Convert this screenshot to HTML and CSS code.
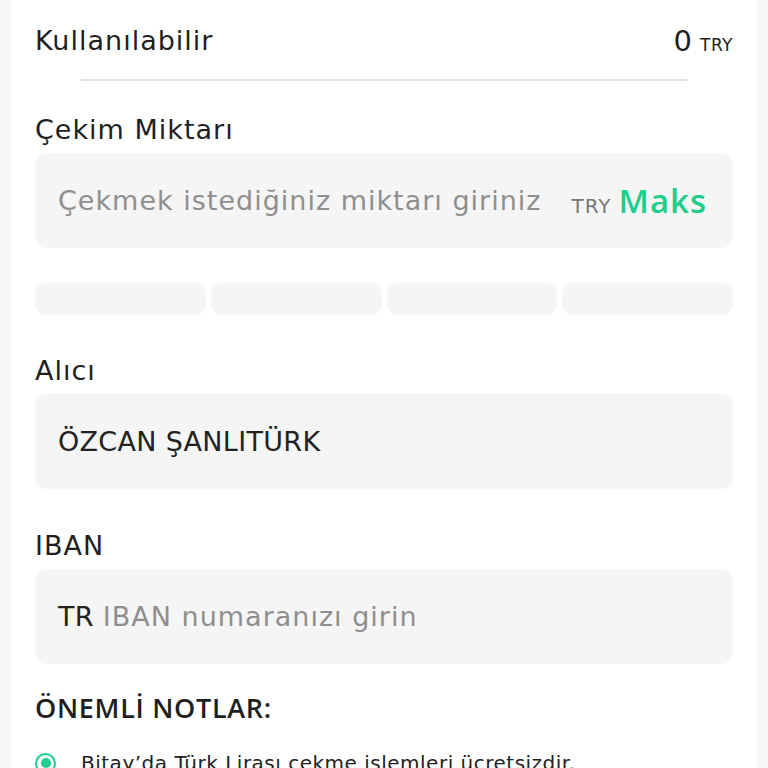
FILE: index.html
```html
<!DOCTYPE html>
<html lang="tr">
<head>
<meta charset="utf-8">
<title>TRY Çekme</title>
<link rel="stylesheet" href="styles.css">
</head>
<body>
<main class="card">
  <div class="balance">
    <span class="balance-label">Kullanılabilir</span>
    <span class="balance-value"><span class="amount">0</span><span class="unit">TRY</span></span>
  </div>
  <div class="divider"></div>

  <label class="field-label first">Çekim Miktarı</label>
  <div class="input">
    <span class="placeholder">Çekmek istediğiniz miktarı giriniz</span>
    <span class="input-suffix"><span class="suffix-unit">TRY</span><span class="max">Maks</span></span>
  </div>
  <div class="chips">
    <span class="chip"></span>
    <span class="chip"></span>
    <span class="chip"></span>
    <span class="chip"></span>
  </div>

  <label class="field-label">Alıcı</label>
  <div class="input">
    <span class="value">ÖZCAN ŞANLITÜRK</span>
  </div>

  <label class="field-label iban">IBAN</label>
  <div class="input">
    <span class="value prefix">TR</span><span class="placeholder">IBAN numaranızı girin</span>
  </div>

  <h2 class="notes-title">ÖNEMLİ NOTLAR:</h2>
  <ul class="notes">
    <li class="note"><span class="dot"></span><span>Bitay’da Türk Lirası çekme işlemleri ücretsizdir.</span></li>
  </ul>
</main>
</body>
</html>
```

FILE: styles.css
```css
* {
  box-sizing: border-box;
}

html, body {
  margin: 0;
  padding: 0;
}

body {
  background: #f6f6f6;
  font-family: "DejaVu Sans", "Open Sans", sans-serif;
  color: #1f1f1f;
  overflow: hidden;
}

.card {
  margin: 0 11px;
  min-height: 100vh;
  background: #ffffff;
  padding: 0 24px;
}

.balance {
  height: 79px;
  display: flex;
  align-items: center;
  justify-content: space-between;
  padding-top: 2px;
}

.balance-label {
  font-size: 27px;
  line-height: 36px;
  letter-spacing: 1px;
}

.balance-value {
  display: flex;
  align-items: baseline;
  gap: 8px;
}

.amount {
  font-size: 29px;
}

.unit {
  font-size: 17px;
  letter-spacing: 0.5px;
}

.divider {
  height: 2px;
  margin: 0 46px;
  background: #e0e0e0;
}

.field-label {
  display: block;
  margin-top: 38px;
  font-size: 27px;
  line-height: 36px;
  height: 36px;
  letter-spacing: 1px;
}

.field-label.first {
  margin-top: 31px;
}

.field-label.iban {
  margin-top: 39px;
}

.input {
  margin-top: 5px;
  height: 95px;
  background: #f5f5f5;
  border-radius: 12px;
  display: flex;
  align-items: center;
  padding: 0 26px 0 23px;
  font-size: 27px;
  letter-spacing: 1px;
}

.placeholder {
  color: #8f8f8f;
  flex: 1;
  white-space: nowrap;
}

.value {
  color: #222222;
  letter-spacing: 0.3px;
}

.value.prefix {
  margin-right: 9px;
}

.input-suffix {
  display: flex;
  align-items: baseline;
  gap: 7px;
}

.suffix-unit {
  color: #777777;
  font-size: 20px;
  letter-spacing: 1px;
}

.max {
  font-family: "Open Sans", sans-serif;
  color: #1ccf8b;
  font-size: 33px;
  font-weight: 600;
  letter-spacing: 1px;
}

.chips {
  margin-top: 35px;
  display: grid;
  grid-template-columns: repeat(4, 1fr);
  gap: 5px;
}

.chip {
  height: 32px;
  background: #f5f5f5;
  border-radius: 11px;
}

.notes-title {
  margin: 26px 0 0;
  font-family: "Open Sans", sans-serif;
  font-size: 27px;
  line-height: 36px;
  font-weight: 600;
  letter-spacing: 0.7px;
}

.notes {
  list-style: none;
  margin: 19px 0 0;
  padding: 0;
}

.note {
  display: flex;
  align-items: center;
  gap: 25px;
  font-size: 20px;
  line-height: 36px;
  letter-spacing: 0.5px;
  color: #222222;
}

.dot {
  flex: none;
  width: 21px;
  height: 21px;
  border: 2.5px solid #1ccf8b;
  border-radius: 50%;
  display: flex;
  align-items: center;
  justify-content: center;
}

.dot::after {
  content: "";
  width: 10px;
  height: 10px;
  border-radius: 50%;
  background: #1ccf8b;
}
```
